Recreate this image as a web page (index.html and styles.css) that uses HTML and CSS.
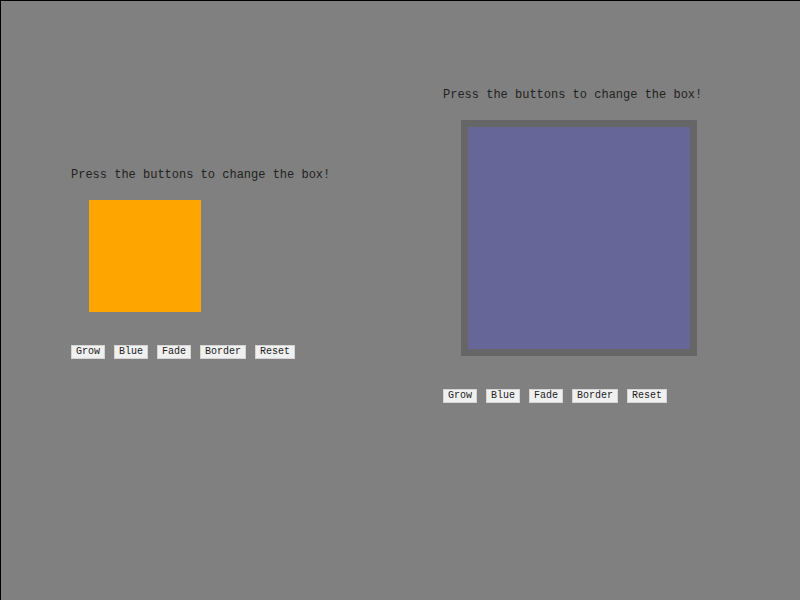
FILE: index.html
```html
<!DOCTYPE html>
<html>
<head>
<meta charset="utf-8">
<link rel="stylesheet" href="styles.css">
</head>
<body>
<div class="page">
  <div class="panel panel-left">
    <p class="caption">Press the buttons to change the box!</p>
    <div class="box box-orange"></div>
    <div class="buttons">
      <button class="btn">Grow</button>
      <button class="btn">Blue</button>
      <button class="btn">Fade</button>
      <button class="btn">Border</button>
      <button class="btn">Reset</button>
    </div>
  </div>
  <div class="panel panel-right">
    <p class="caption">Press the buttons to change the box!</p>
    <div class="box box-blue"></div>
    <div class="buttons">
      <button class="btn">Grow</button>
      <button class="btn">Blue</button>
      <button class="btn">Fade</button>
      <button class="btn">Border</button>
      <button class="btn">Reset</button>
    </div>
  </div>
</div>
</body>
</html>
```
FILE: styles.css
```css
html, body {
  margin: 0;
  padding: 0;
  background: #808080;
}
.page {
  box-sizing: border-box;
  width: 800px;
  height: 600px;
  background: #808080;
  border-top: 1px solid #000;
  border-left: 1px solid #000;
  display: flex;
  align-items: flex-start;
  padding-left: 70px;
  font-family: "Liberation Mono", "Courier New", monospace;
  color: #222;
  overflow: hidden;
}
.panel {
  flex: 0 0 372px;
  display: flex;
  flex-direction: column;
  align-items: flex-start;
}
.panel-left { margin-top: 167px; }
.panel-right { margin-top: 87px; }
.caption {
  margin: 0;
  font-size: 12px;
  line-height: 14px;
  white-space: nowrap;
}
.box {
  margin: 18px 18px 33px 18px;
}
.box-orange {
  width: 112px;
  height: 112px;
  background: #ffa500;
}
.box-blue {
  width: 222px;
  height: 222px;
  background: #666699;
  border: 7px solid #666666;
}
.buttons {
  display: flex;
  gap: 9px;
}
.btn {
  box-sizing: border-box;
  height: 14px;
  margin: 0;
  padding: 0 4px;
  font-family: "Liberation Mono", "Courier New", monospace;
  font-size: 10px;
  line-height: 12px;
  color: #222;
  background: #f0f0f0;
  border: 1px solid #d4d4d4;
  border-radius: 0;
}
```
